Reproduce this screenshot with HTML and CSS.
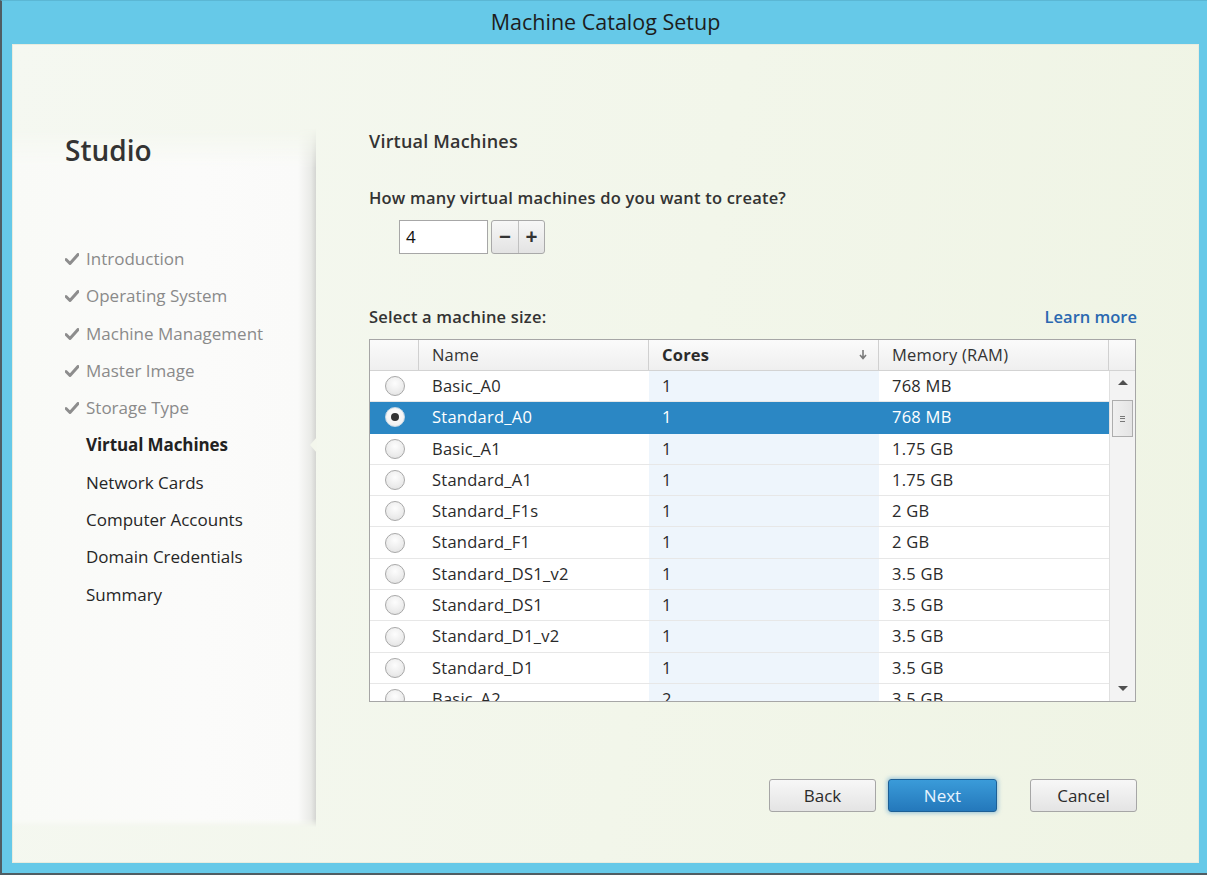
FILE: index.html
```html
<!DOCTYPE html>
<html lang="en">
<head>
<meta charset="utf-8">
<title>Machine Catalog Setup</title>
<link rel="stylesheet" href="styles.css">
</head>
<body>
<div class="window">
  <div class="titlebar">Machine Catalog Setup</div>
  <div class="client">
    <aside class="sidebar">
      <div class="brand">Studio</div>
      <ul class="steps">
        <li class="done"><svg class="check" viewBox="0 0 14 12"><path d="M1 6.5 L5 10.5 L13 1.5" /></svg>Introduction</li>
        <li class="done"><svg class="check" viewBox="0 0 14 12"><path d="M1 6.5 L5 10.5 L13 1.5" /></svg>Operating System</li>
        <li class="done"><svg class="check" viewBox="0 0 14 12"><path d="M1 6.5 L5 10.5 L13 1.5" /></svg>Machine Management</li>
        <li class="done"><svg class="check" viewBox="0 0 14 12"><path d="M1 6.5 L5 10.5 L13 1.5" /></svg>Master Image</li>
        <li class="done"><svg class="check" viewBox="0 0 14 12"><path d="M1 6.5 L5 10.5 L13 1.5" /></svg>Storage Type</li>
        <li class="current">Virtual Machines<span class="notch"></span></li>
        <li class="todo">Network Cards</li>
        <li class="todo">Computer Accounts</li>
        <li class="todo">Domain Credentials</li>
        <li class="todo">Summary</li>
      </ul>
    </aside>
    <main class="main">
      <h1 class="page-title">Virtual Machines</h1>
      <div class="question">How many virtual machines do you want to create?</div>
      <div class="spinner">
        <div class="num-input">4</div>
        <div class="spin-btns">
          <span class="spin-btn">&minus;</span>
          <span class="spin-btn">+</span>
        </div>
      </div>
      <div class="size-row">
        <span class="label">Select a machine size:</span>
        <a class="learn" href="#">Learn more</a>
      </div>
      <div class="tbl">
        <div class="thead">
          <div class="th th-radio"></div>
          <div class="th">Name</div>
          <div class="th th-sorted">Cores<svg class="sort" viewBox="0 0 8 10"><path d="M4 0 V8 M1 5 L4 8.5 L7 5" /></svg></div>
          <div class="th">Memory (RAM)</div>
          <div class="th th-corner"></div>
        </div>
        <div class="tbody-wrap">
          <div class="tbody">
            <div class="tr"><div class="td td-radio"><span class="radio"></span></div><div class="td">Basic_A0</div><div class="td td-sorted">1</div><div class="td">768 MB</div></div>
            <div class="tr selected"><div class="td td-radio"><span class="radio checked"></span></div><div class="td">Standard_A0</div><div class="td td-sorted">1</div><div class="td">768 MB</div></div>
            <div class="tr"><div class="td td-radio"><span class="radio"></span></div><div class="td">Basic_A1</div><div class="td td-sorted">1</div><div class="td">1.75 GB</div></div>
            <div class="tr"><div class="td td-radio"><span class="radio"></span></div><div class="td">Standard_A1</div><div class="td td-sorted">1</div><div class="td">1.75 GB</div></div>
            <div class="tr"><div class="td td-radio"><span class="radio"></span></div><div class="td">Standard_F1s</div><div class="td td-sorted">1</div><div class="td">2 GB</div></div>
            <div class="tr"><div class="td td-radio"><span class="radio"></span></div><div class="td">Standard_F1</div><div class="td td-sorted">1</div><div class="td">2 GB</div></div>
            <div class="tr"><div class="td td-radio"><span class="radio"></span></div><div class="td">Standard_DS1_v2</div><div class="td td-sorted">1</div><div class="td">3.5 GB</div></div>
            <div class="tr"><div class="td td-radio"><span class="radio"></span></div><div class="td">Standard_DS1</div><div class="td td-sorted">1</div><div class="td">3.5 GB</div></div>
            <div class="tr"><div class="td td-radio"><span class="radio"></span></div><div class="td">Standard_D1_v2</div><div class="td td-sorted">1</div><div class="td">3.5 GB</div></div>
            <div class="tr"><div class="td td-radio"><span class="radio"></span></div><div class="td">Standard_D1</div><div class="td td-sorted">1</div><div class="td">3.5 GB</div></div>
            <div class="tr"><div class="td td-radio"><span class="radio"></span></div><div class="td">Basic_A2</div><div class="td td-sorted">2</div><div class="td">3.5 GB</div></div>
          </div>
          <div class="vscroll">
            <span class="arrow up"></span>
            <div class="track"><div class="thumb"><span class="grip"></span></div></div>
            <span class="arrow down"></span>
          </div>
        </div>
      </div>
      <div class="actions">
        <button class="btn">Back</button>
        <button class="btn primary">Next</button>
        <button class="btn cancel">Cancel</button>
      </div>
    </main>
  </div>
</div>
</body>
</html>
```
FILE: styles.css
```css
* { box-sizing: border-box; }
html, body { margin: 0; padding: 0; }
body {
  width: 1207px;
  height: 875px;
  overflow: hidden;
  background: #66c9e8;
  font-family: "Open Sans", "Noto Sans", sans-serif;
  color: #222;
}
.window {
  width: 1207px;
  height: 875px;
  background: #66c9e8;
  border-left: 2px solid #4f5d63;
  border-bottom: 2px solid #4f5d63;
  border-top: 1px solid #5bb7d4;
  display: flex;
  flex-direction: column;
}
.titlebar {
  height: 43px;
  line-height: 42px;
  text-align: center;
  font-size: 21.5px;
  color: #1d1d1d;
  padding-left: 2px;
}
.client {
  margin: 0 8px 0 10px;
  height: 819px;
  background: linear-gradient(100deg, #f5f8f1 0%, #f2f6ea 55%, #eff4e4 100%);
  border: 1px solid #e8ecdf;
  display: flex;
  align-items: flex-start;
}
.sidebar {
  width: 303px;
  flex: none;
  margin-top: 83px;
  height: 699px;
  padding: 4px 0 0 52px;
  position: relative;
}
.sidebar::before {
  content: "";
  position: absolute;
  top: 0;
  left: 0;
  right: 0;
  bottom: 0;
  background: linear-gradient(to right, #f9faf7 0, #fbfbfa 60%, #fafaf9 calc(100% - 18px), #e9eae7 calc(100% - 5px), #d4d5d2 100%);
  -webkit-mask-image: linear-gradient(to bottom, transparent 0, #000 40px, #000 calc(100% - 8px), transparent 100%);
  mask-image: linear-gradient(to bottom, transparent 0, #000 40px, #000 calc(100% - 8px), transparent 100%);
}
.brand, .steps { position: relative; }
.brand {
  font-size: 28px;
  font-weight: 600;
  line-height: 36px;
  color: #333;
}
.steps {
  list-style: none;
  margin: 72px 0 0 0;
  padding: 0;
}
.steps li {
  height: 37.3px;
  line-height: 37.3px;
  font-size: 17px;
  padding-left: 21px;
  position: relative;
  white-space: nowrap;
}
.steps li.done { color: #8a8a8a; }
.steps li.current { font-weight: 700; color: #222; letter-spacing: -0.1px; }
.steps li.todo { color: #262626; }
.check {
  position: absolute;
  left: 0;
  top: 13px;
  width: 14px;
  height: 12px;
  fill: none;
  stroke: #8d8d8d;
  stroke-width: 3;
  stroke-linecap: round;
  stroke-linejoin: round;
}
.notch {
  position: absolute;
  left: 245px;
  top: 11px;
  width: 0;
  height: 0;
  border-top: 8px solid transparent;
  border-bottom: 8px solid transparent;
  border-right: 7px solid #f3f6ec;
}
.main {
  flex: 1;
  padding: 0 61px 0 53px;
  display: flex;
  flex-direction: column;
}
.page-title {
  margin: 84px 0 0 0;
  font-size: 18px;
  line-height: 24px;
  font-weight: 600;
  color: #333;
  letter-spacing: 0.2px;
}
.question {
  margin-top: 33px;
  font-size: 16.5px;
  line-height: 24px;
  font-weight: 600;
  color: #333;
  letter-spacing: 0.2px;
}
.spinner {
  margin: 10px 0 0 30px;
  display: flex;
  gap: 3px;
  height: 34px;
}
.num-input {
  width: 89px;
  height: 34px;
  border: 1px solid #a7a7a7;
  background: #fff;
  font-size: 17px;
  line-height: 32px;
  padding-left: 6px;
  color: #111;
}
.spin-btns {
  display: flex;
  border: 1px solid #a9a9a9;
  border-radius: 3px;
  overflow: hidden;
  background: linear-gradient(#f7f7f7, #e3e3e3);
}
.spin-btn {
  width: 26px;
  text-align: center;
  font-size: 21px;
  font-weight: 700;
  line-height: 31px;
  color: #333;
}
.spin-btn + .spin-btn { border-left: 1px solid #c0c0c0; }
.size-row {
  margin-top: 50px;
  display: flex;
  justify-content: space-between;
  align-items: center;
  height: 24px;
}
.label {
  font-size: 16.5px;
  font-weight: 600;
  color: #333;
  letter-spacing: 0.2px;
}
.learn {
  font-size: 16.5px;
  font-weight: 600;
  color: #2a68b0;
  text-decoration: none;
}
.tbl {
  margin-top: 11px;
  width: 767px;
  height: 363px;
  border: 1px solid #a6a6a6;
  background: #fff;
  display: flex;
  flex-direction: column;
  overflow: hidden;
}
.thead {
  display: grid;
  grid-template-columns: 49px 230px 230px 230px 1fr;
  height: 31px;
  flex: none;
  background: linear-gradient(#fbfbfb, #efefef);
  border-bottom: 1px solid #d3d3d3;
}
.th {
  border-right: 1px solid #d0d0d0;
  font-size: 16.5px;
  line-height: 30px;
  padding-left: 13px;
  color: #333;
  position: relative;
  letter-spacing: 0.2px;
}
.th-corner { border-right: none; }
.th-sorted { font-weight: 700; color: #2b2b2b; }
.sort {
  position: absolute;
  right: 11px;
  top: 10px;
  width: 8px;
  height: 10px;
  fill: none;
  stroke: #7a7a7a;
  stroke-width: 1.6;
}
.tbody-wrap {
  flex: 1;
  display: flex;
  overflow: hidden;
}
.tbody {
  width: 739px;
  flex: none;
  overflow: hidden;
}
.tr {
  display: grid;
  grid-template-columns: 49px 230px 230px 230px;
  height: 31.3px;
  border-bottom: 1px solid #e7e7e7;
}
.td {
  font-size: 16.5px;
  line-height: 30px;
  padding-left: 13px;
  color: #2a2a2a;
  white-space: nowrap;
  letter-spacing: 0.25px;
}
.td-sorted { background: #eef5fc; }
.td-radio {
  padding-left: 15px;
  display: flex;
  align-items: center;
}
.radio {
  width: 20px;
  height: 20px;
  border-radius: 50%;
  border: 1px solid #a8a8a8;
  background: radial-gradient(circle at 50% 35%, #fdfdfd 0%, #ececec 60%, #dcdcdc 100%);
  position: relative;
  display: block;
}
.radio.checked {
  border-color: #c9d9e6;
  background: radial-gradient(circle at 50% 35%, #ffffff 0%, #f2f2f2 70%, #dedede 100%);
}
.radio.checked::after {
  content: "";
  position: absolute;
  left: 5px;
  top: 5px;
  width: 8px;
  height: 8px;
  border-radius: 50%;
  background: #333;
}
.tr.selected { background: #2b87c4; border-bottom-color: #2b87c4; }
.tr.selected .td { color: #fff; }
.tr.selected .td-sorted { background: transparent; }
.vscroll {
  flex: 1;
  background: #f3f3f3;
  border-left: 1px solid #e0e0e0;
  display: flex;
  flex-direction: column;
  align-items: center;
  padding-top: 9px;
}
.arrow {
  width: 0;
  height: 0;
  border-left: 5px solid transparent;
  border-right: 5px solid transparent;
  flex: none;
}
.arrow.up { border-bottom: 5px solid #505050; }
.arrow.down { border-top: 5px solid #505050; margin-top: auto; margin-bottom: 10px; }
.track { width: 100%; padding: 0 2px; }
.thumb {
  margin-top: 15px;
  height: 37px;
  width: 21px;
  border: 1px solid #adadad;
  background: linear-gradient(to right, #f0f0f0, #e4e4e4);
  display: flex;
  align-items: center;
  justify-content: center;
}
.grip {
  width: 5px;
  height: 6px;
  border-top: 1px solid #777;
  border-bottom: 1px solid #777;
  position: relative;
}
.grip::after {
  content: "";
  position: absolute;
  left: 0;
  right: 0;
  top: 1.5px;
  border-top: 1px solid #777;
}
.actions {
  margin-top: 77px;
  display: flex;
  justify-content: flex-end;
  gap: 12px;
}
.btn {
  font-family: "Open Sans", "Noto Sans", sans-serif;
  width: 107px;
  height: 33px;
  border: 1px solid #a6a6a6;
  border-radius: 3px;
  background: linear-gradient(#f7f7f7, #e4e4e4);
  font-size: 17px;
  color: #2b2b2b;
  padding: 0;
}
.btn.primary {
  width: 109px;
  background: linear-gradient(#3a9bd9, #2478bb);
  border-color: #1d5f95;
  color: #e8f4ff;
  box-shadow: 0 0 4px 1px rgba(70, 150, 200, 0.55);
}
.btn.cancel { margin-left: 21px; }
```
